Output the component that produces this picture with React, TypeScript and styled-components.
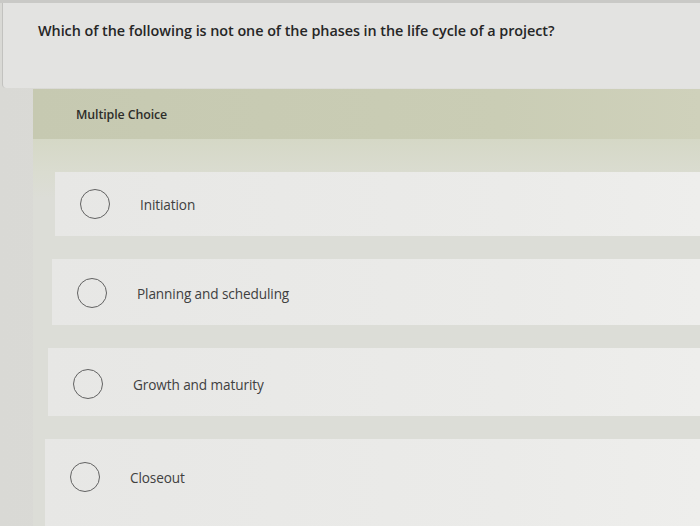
import styled, { createGlobalStyle } from 'styled-components';

const GlobalStyle = createGlobalStyle`
  html, body {
    margin: 0;
    padding: 0;
    background: #dcdcd8;
  }
  body {
    font-family: "Open Sans", Lato, "Liberation Sans", sans-serif;
  }
`;

const Page = styled.div`
  width: 700px;
  height: 526px;
  overflow: hidden;
  background: linear-gradient(90deg, #d9d9d5 0%, #dededa 60%, #e2e2e0 100%);
`;

const TopStrip = styled.div`
  height: 3px;
  background: #c9c9c6;
`;

// Question
const QuestionCard = styled.div`
  height: 85px;
  box-sizing: border-box;
  margin-left: 2px;
  padding: 18px 0 0 35px;
  border-left: 1px solid #c2c2bf;
  border-bottom-left-radius: 4px;
  background: #e3e3e1;
`;

const QuestionText = styled.p`
  margin: 0;
  font-size: 14.4px;
  font-weight: 600;
  color: #262626;
  letter-spacing: -0.05px;
`;

// Choices
const ChoicePanel = styled.section`
  margin: 1px 0 0 33px;
  background: #dcddd7;
`;

const PanelHeader = styled.div`
  height: 50px;
  display: flex;
  align-items: center;
  padding-left: 43px;
  background: linear-gradient(90deg, #c6c9b1 0%, #cacdb5 70%, #cfd1bb 100%);
  font-size: 12.4px;
  font-weight: 600;
  color: #2e2e2a;
  letter-spacing: -0.1px;
`;

const OptionList = styled.div`
  display: flex;
  flex-direction: column;
  gap: 23px;
  padding-top: 33px;
  background: linear-gradient(180deg, #d5d8c6 0px, #dadcd0 33px, #dcddd7 60px);
`;

const OptionRow = styled.div<{ $indent: number; $top: number; $bottom: number }>`
  display: flex;
  align-items: center;
  gap: 30px;
  height: 64px;
  margin-left: ${({ $indent }) => $indent}px;
  padding: ${({ $top }) => $top}px 0 ${({ $bottom }) => $bottom}px 25px;
  background: linear-gradient(90deg, #e7e7e5 0%, #ebebe9 70%, #eeeeec 100%);
`;

const Radio = styled.span`
  width: 28px;
  height: 28px;
  flex: none;
  border: 1.6px solid #626262;
  border-radius: 50%;
`;

const OptionLabel = styled.span`
  font-size: 13.6px;
  font-weight: 500;
  color: #404040;
  letter-spacing: -0.1px;
`;

const options = [
  { label: 'Initiation', indent: 22, top: 0, bottom: 0 },
  { label: 'Planning and scheduling', indent: 19, top: 2, bottom: 0 },
  { label: 'Growth and maturity', indent: 15, top: 4, bottom: 0 },
  { label: 'Closeout', indent: 12, top: 6, bottom: 20 },
];

export default function App() {
  return (
    <Page>
      <GlobalStyle />
      <TopStrip />
      <QuestionCard>
        <QuestionText>
          Which of the following is not one of the phases in the life cycle of a project?
        </QuestionText>
      </QuestionCard>
      <ChoicePanel>
        <PanelHeader>Multiple Choice</PanelHeader>
        <OptionList>
          {options.map((o) => (
            <OptionRow key={o.label} $indent={o.indent} $top={o.top} $bottom={o.bottom}>
              <Radio />
              <OptionLabel>{o.label}</OptionLabel>
            </OptionRow>
          ))}
        </OptionList>
      </ChoicePanel>
    </Page>
  );
}
